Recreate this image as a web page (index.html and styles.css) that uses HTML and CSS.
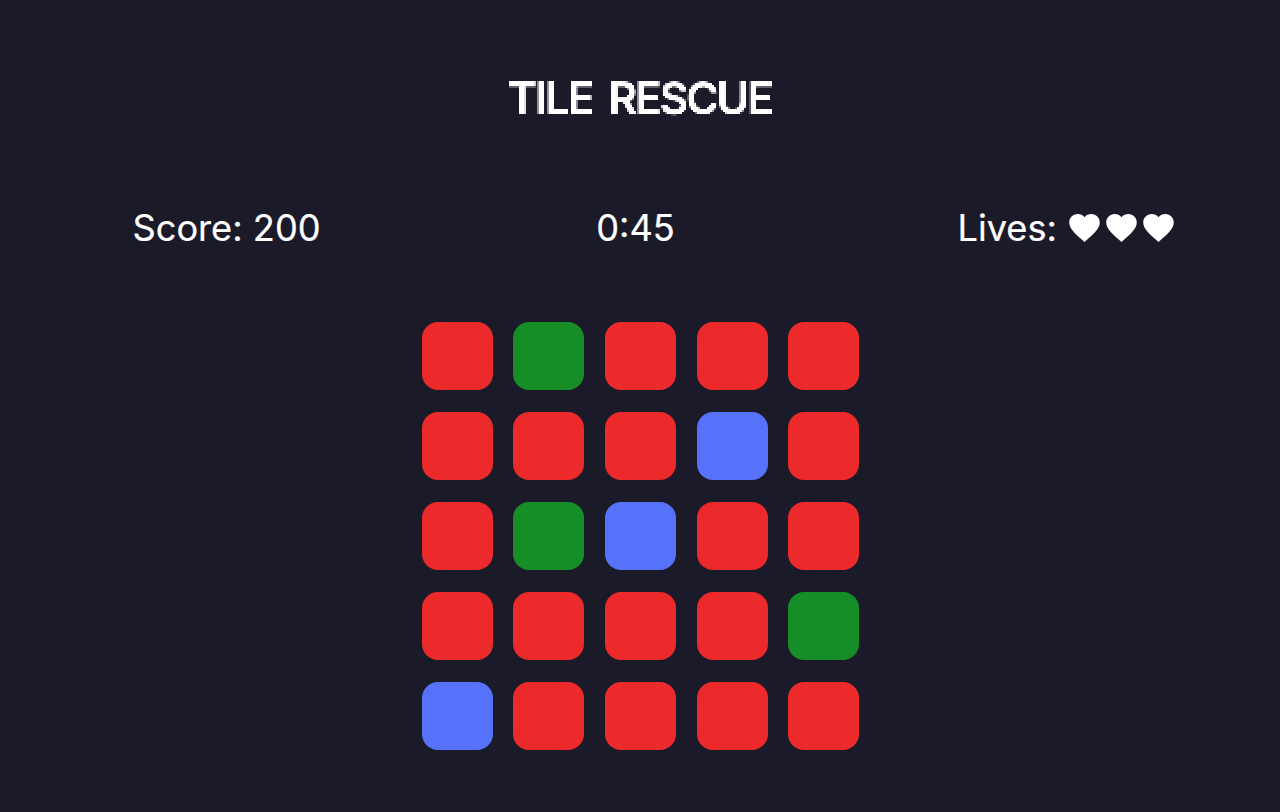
FILE: index.html

```html
<!DOCTYPE html>
<html lang="en">
<head>
  <meta charset="UTF-8" />
  <title>Tile Rescue</title>
  <link rel="stylesheet" href="styles.css">
</head>
<body>

  <!-- chunky edges for the title -->
  <svg class="defs" width="0" height="0">
    <filter id="pixel" x="0" y="0" width="100%" height="100%" color-interpolation-filters="sRGB">
      <feFlood x="0" y="0" width="1" height="1"/>
      <feComposite width="2" height="2"/>
      <feTile result="grid"/>
      <feComposite in="SourceGraphic" in2="grid" operator="in"/>
      <feMorphology operator="dilate" radius="1"/>
    </filter>
  </svg>

  <h1>TILE RESCUE</h1>

  <div class="stats">
    <span>Score: 200</span>
    <span>0:45</span>
    <span class="lives">Lives:
      <span class="hearts">
        <svg class="heart" viewBox="2 3 20 18.35"><path d="M12 21.35l-1.45-1.32C5.4 15.36 2 12.28 2 8.5 2 5.42 4.42 3 7.5 3c1.74 0 3.41.81 4.5 2.09C13.09 3.81 14.76 3 16.5 3 19.58 3 22 5.42 22 8.5c0 3.78-3.4 6.86-8.55 11.54L12 21.35z"/></svg>
        <svg class="heart" viewBox="2 3 20 18.35"><path d="M12 21.35l-1.45-1.32C5.4 15.36 2 12.28 2 8.5 2 5.42 4.42 3 7.5 3c1.74 0 3.41.81 4.5 2.09C13.09 3.81 14.76 3 16.5 3 19.58 3 22 5.42 22 8.5c0 3.78-3.4 6.86-8.55 11.54L12 21.35z"/></svg>
        <svg class="heart" viewBox="2 3 20 18.35"><path d="M12 21.35l-1.45-1.32C5.4 15.36 2 12.28 2 8.5 2 5.42 4.42 3 7.5 3c1.74 0 3.41.81 4.5 2.09C13.09 3.81 14.76 3 16.5 3 19.58 3 22 5.42 22 8.5c0 3.78-3.4 6.86-8.55 11.54L12 21.35z"/></svg>
      </span>
    </span>
  </div>

  <div class="board">
    <div class="tile red"></div><div class="tile green"></div><div class="tile red"></div><div class="tile red"></div><div class="tile red"></div>
    <div class="tile red"></div><div class="tile red"></div><div class="tile red"></div><div class="tile blue"></div><div class="tile red"></div>
    <div class="tile red"></div><div class="tile green"></div><div class="tile blue"></div><div class="tile red"></div><div class="tile red"></div>
    <div class="tile red"></div><div class="tile red"></div><div class="tile red"></div><div class="tile red"></div><div class="tile green"></div>
    <div class="tile blue"></div><div class="tile red"></div><div class="tile red"></div><div class="tile red"></div><div class="tile red"></div>
  </div>

</body>
</html>
```

FILE: styles.css

```css
body {
  margin: 0;
  height: 812px;
  overflow: hidden;
  background: #1a1a28;
  color: #fff;
  font-family: Inter, sans-serif;
}
.defs {
  display: block;
}
h1 {
  margin: 0;
  padding-top: 73px;
  height: 51px;
  line-height: 51px;
  text-align: center;
  font-size: 44px;
  font-weight: 500;
  letter-spacing: -1.9px;
  word-spacing: 6px;
  filter: url(#pixel);
}
.stats {
  display: flex;
  justify-content: space-between;
  align-items: center;
  margin-top: 80px;
  height: 48px;
  padding: 0 106px 0 132.5px;
  font-size: 36.2px;
  -webkit-text-stroke: 0.2px #fff;
}
.lives {
  display: flex;
  align-items: center;
  gap: 12px;
  margin-left: 7px;
}
.hearts {
  display: flex;
  gap: 6px;
}
.heart {
  display: block;
  width: 31px;
  height: 28px;
  fill: #fff;
}
.board {
  display: grid;
  grid-template-columns: repeat(5, 71px);
  grid-auto-rows: 68px;
  gap: 22px 20.7px;
  justify-content: center;
  margin: 70px 0 0 0.8px;
}
.tile {
  border-radius: 16px;
}
.red {
  background: #ec2a2b;
}
.green {
  background: #168d26;
}
.blue {
  background: #5672fb;
}
```
